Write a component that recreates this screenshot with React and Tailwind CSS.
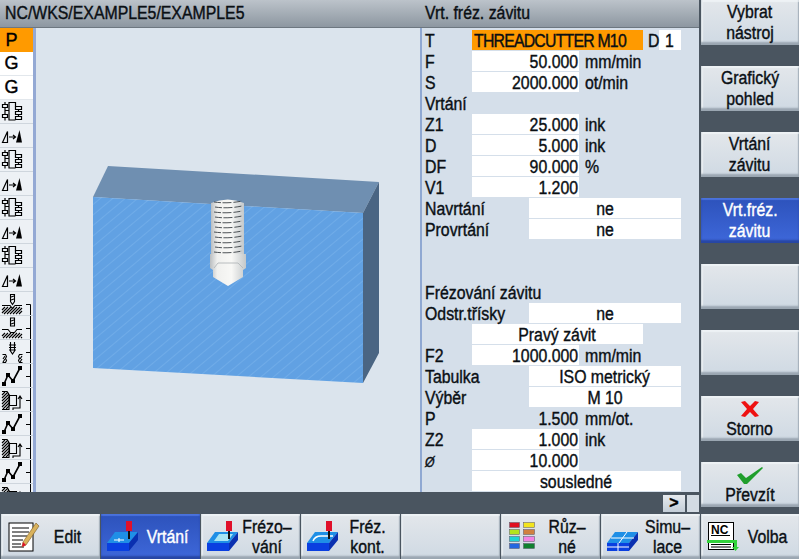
import React from 'react';

const font = "font-['Liberation_Sans',sans-serif] [-webkit-text-stroke:0.4px]";

// panel type is a narrow face, so every label is squeezed horizontally
function Txt({ children, align = 'left', className = '' }) {
  const origin = align === 'right' ? 'origin-right' : align === 'center' ? 'origin-center' : 'origin-left';
  return <span className={`inline-block whitespace-nowrap scale-x-[0.88] ${origin} ${className}`}>{children}</span>;
}

// ---- side bar glyphs (33x24 cells) ----
const Tree = () => (
  <g fill="none" stroke="#000" strokeWidth="1.2">
    <path d="M2.500 4.500h5v3h-5zM2.500 14.500h5v3h-5zM15.500 6.500h6v3h-6zM15.500 11.500h6v3h-6zM15.500 16.500h6v3h-6z" />
    <path d="M5 2v2.500M5 7.500v3h4V2.500h6.500V6.500M9 10.500v9.500h6.500M5 10.500v4M5 17.500v3M18.500 9.500v2M18.500 14.500v2" />
  </g>
);

const Tri = () => (
  <g>
    <path d="M2.500 18.500L7.500 7.500V18.500Z" fill="none" stroke="#000" strokeWidth="1.2" />
    <path d="M9 13h6M13 11l2.500 2-2.500 2" fill="none" stroke="#000" strokeWidth="1.2" />
    <path d="M16 18.500L19.500 6L22 18.500Z" fill="#000" />
  </g>
);

const hatch = (x0, x1, y0, y1) => {
  let d = '';
  for (let x = x0; x < x1 + (y1 - y0); x += 3) {
    const a = Math.max(x - (y1 - y0), x0);
    d += `M${a} ${y0 + (y1 - y0) - (a - (x - (y1 - y0)))}L${Math.min(x, x1)} ${y0 + (x > x1 ? x - x1 : 0)}`;
  }
  return d;
};

const Drill = () => (
  <g fill="none" stroke="#000" strokeWidth="1.1">
    <path d="M10.500 2.500h4v7l-2 3-2-3z" />
    <path d="M11 5l3-1M11 8l3-1" />
    <path d="M2 13.500h8l2.500 3 2.500-3h7" />
    <path d={hatch(2, 22, 15, 22)} />
  </g>
);

const Pocket = () => (
  <g fill="none" stroke="#000" strokeWidth="1.1">
    <path d="M10.500 2h4v8h-4z" />
    <path d="M11 5l3-1M11 8l3-1" />
    <path d="M2 13.500h6l2.500 3h4l2.500-3h5" />
    <path d={hatch(2, 22, 17, 22)} />
  </g>
);

const Thread = () => (
  <g fill="none" stroke="#000" strokeWidth="1.1">
    <path d="M10.500 2v9l2 3 2-3V2M9 5h7M9 7.500h7M9 10h7" />
    <path d="M2.500 14.500h3l1 2-1 2 1 2-1 2h-3" />
    <path d="M22.500 14.500h-3l-1 2 1 2-1 2 1 2h3" />
    <path d="M3 19l2-3M3 22l2-3M20 19l2-3M20 22l2-3" />
  </g>
);

const Zigzag = () => (
  <g>
    <path d="M4 20L8 11L13 17L20 4" fill="none" stroke="#000" strokeWidth="1.6" />
    <path d="M2 18h4v4H2zM6 9h4v4H6zM11 15h4v4h-4zM18 2h4v4h-4z" fill="#000" />
  </g>
);

const HatchArrow = () => (
  <g fill="none" stroke="#000" strokeWidth="1.1">
    <path d="M2 3.500h5l2 3v15H2" />
    <path d={hatch(2, 9, 4, 21)} />
    <path d="M9.500 7.500h7v10h-7z" />
    <path d="M13 22v-2h7V9M18 11l2-3 2 3" />
  </g>
);

const sideIcons = [
  Tree, Tri, Tree, Tri, Tree, Tri, Tree, Tri,
  Drill, Pocket, Thread, Zigzag, HatchArrow, Zigzag, HatchArrow, Zigzag, HatchArrow,
];

function SideBar() {
  return (
    <div className={`w-[33px] shrink-0 overflow-hidden bg-[#edf1f5] text-black text-[18px] ${font}`}>
      <div className="h-[24px] bg-[#ff9a00] flex items-center justify-center pr-[10px]">P</div>
      <div className="h-[24px] bg-white border-b border-[#e2e7ec] flex items-center justify-center pr-[10px]">G</div>
      <div className="h-[24px] bg-white border-b border-[#e2e7ec] flex items-center justify-center pr-[10px]">G</div>
      {sideIcons.map((Icon, i) => (
        <svg key={i} width="33" height="24" className="block border-b border-[#cfd6dd] box-border">
          <Icon />
          {i >= 8 && <path d={i === 8 ? 'M26 12.500h4.500V24' : 'M30.500 0V24M26 12.500h4.500'} fill="none" stroke="#000" />}
        </svg>
      ))}
    </div>
  );
}

// ---- workpiece preview ----
function Scene() {
  const threads = Array.from({ length: 11 }, (_, i) => 201 + i * 5);
  return (
    <svg width="384" height="464" viewBox="36 28 384 464" className="block">
      <defs>
        <pattern id="stripes" width="8" height="8" patternUnits="userSpaceOnUse" patternTransform="rotate(-40)">
          <rect width="8" height="8" fill="#61a1e3" />
          <rect width="8" height="1" fill="#70ace8" />
        </pattern>
        <linearGradient id="cyl" x1="0" x2="1" y1="0" y2="0">
          <stop offset="0" stopColor="#b9bdc0" />
          <stop offset="0.2" stopColor="#f0f0ee" />
          <stop offset="0.6" stopColor="#f8f8f6" />
          <stop offset="1" stopColor="#c4c8ca" />
        </linearGradient>
      </defs>
      <path d="M93 197L108 166L379 182L363 213Z" fill="#6f8fb1" />
      <path d="M379 182V353L363 383V213Z" fill="#4a6583" />
      <path d="M93 197L363 213V383L93 368Z" fill="url(#stripes)" />
      <path d="M211 203Q228 196 244 203V254H211Z" fill="url(#cyl)" />
      {threads.map((y, i) => (
        <path key={y} d={`M${214 + (i % 2)} ${y + 1}Q228 ${y + 3} 242 ${y}`} fill="none" stroke="#3a3f44" strokeWidth="0.9" strokeDasharray="7 1.500 9 2" />
      ))}
      <path d="M210 254H246V268L243 270V277L228 286L213 277V270L210 268Z" fill="url(#cyl)" />
      <path d="M214 268L218 263H238L243 268" fill="none" stroke="#b8bcbe" />
    </svg>
  );
}

// ---- parameter form ----
const rows = [
  { label: 'F', value: '50.000', unit: 'mm/min' },
  { label: 'S', value: '2000.000', unit: 'ot/min' },
  { label: 'Vrtání' },
  { label: 'Z1', value: '25.000', unit: 'ink' },
  { label: 'D', value: '5.000', unit: 'ink' },
  { label: 'DF', value: '90.000', unit: '%' },
  { label: 'V1', value: '1.200' },
  { label: 'Navrtání', toggle: 'ne' },
  { label: 'Provrtání', toggle: 'ne' },
  {},
  {},
  { label: 'Frézování závitu' },
  { label: 'Odstr.třísky', toggle: 'ne' },
  { label: '', wide: 'Pravý závit', w: 'w-[171px]' },
  { label: 'F2', value: '1000.000', unit: 'mm/min' },
  { label: 'Tabulka', toggle: 'ISO metrický' },
  { label: 'Výběr', toggle: 'M 10' },
  { label: 'P', value: '1.500', unit: 'mm/ot.', plain: true },
  { label: 'Z2', value: '1.000', unit: 'ink' },
  { label: 'Ø', labelClass: 'text-[14px] italic font-normal', value: '10.000' },
  { label: '', wide: 'sousledné', w: 'w-[209px]' },
];

function FormRow({ row }) {
  if (row.toggle) {
    return (
      <div className="h-[21px] flex">
        <div className="w-[107px] pl-[3px]"><Txt>{row.label}</Txt></div>
        <div className="w-[152px] h-[20px] bg-white text-center"><Txt align="center">{row.toggle}</Txt></div>
      </div>
    );
  }
  if (row.wide) {
    return (
      <div className="h-[21px] flex pl-[50px]">
        <div className={`${row.w} h-[20px] bg-white text-center`}><Txt align="center">{row.wide}</Txt></div>
      </div>
    );
  }
  if (row.value) {
    return (
      <div className="h-[21px] flex">
        <div className="w-[50px] pl-[3px]"><Txt className={row.labelClass}>{row.label}</Txt></div>
        <div className={`w-[107px] h-[20px] text-right pr-[1px] ${row.plain ? '' : 'bg-white'}`}><Txt align="right">{row.value}</Txt></div>
        <div className="ml-[6px]"><Txt>{row.unit}</Txt></div>
      </div>
    );
  }
  return <div className="h-[21px] pl-[3px]"><Txt>{row.label}</Txt></div>;
}

function ParamForm() {
  return (
    <div className={`w-[279px] shrink-0 border-l-2 border-[#8fa8d2] bg-[#d5dfea] pt-[2px] text-[18px] leading-[22px] text-[#0a0f14] ${font}`}>
      <div className="h-[21px] flex">
        <div className="w-[50px] pl-[3px]"><Txt>T</Txt></div>
        <div className="w-[171px] h-[20px] bg-[#ff9a00] pl-[2px]"><Txt className="tracking-[-0.9px]">THREADCUTTER M10</Txt></div>
        <div className="w-[16px] pl-[5px]"><Txt>D</Txt></div>
        <div className="w-[22px] h-[20px] bg-white pl-[6px]"><Txt>1</Txt></div>
      </div>
      {rows.map((row, i) => (
        <FormRow key={i} row={row} />
      ))}
    </div>
  );
}

// ---- soft keys ----
const keyIdle =
  'bg-linear-to-b from-[#e3e7eb] to-[#cfd9e3] text-[#0a0f14] shadow-[inset_0_-3px_2px_#9aa6b1,inset_2px_2px_1px_#eef2f5,inset_-1px_0_1px_#aab4be]';
const keyActive =
  'bg-linear-to-b from-[#2d52bb] to-[#3e68da] text-white shadow-[inset_0_-3px_2px_#2746a4,inset_0_2px_1px_#4a72dc]';

function SideKey({ lines = [], active, icon }) {
  return (
    <div className={`h-[45px] pt-[1px] flex flex-col items-center justify-center text-[18px] leading-[21px] text-center ${font} ${active ? keyActive : keyIdle}`}>
      {icon}
      {lines.map((line) => (
        <Txt key={line} align="center">{line}</Txt>
      ))}
    </div>
  );
}

function BottomKey({ lines = [], active, icon }) {
  return (
    <div className={`relative w-[99px] h-[45px] shrink-0 flex items-center pl-[36px] pr-[2px] text-[18px] leading-[20px] ${font} ${active ? keyActive : keyIdle}`}>
      {icon && (
        <svg width="40" height="45" className="absolute left-0 top-0">
          {icon}
        </svg>
      )}
      <div className="flex-1 flex flex-col items-center">
        {lines.map((line) => (
          <Txt key={line} align="center">{line}</Txt>
        ))}
      </div>
    </div>
  );
}

// machined block with spindle, shared by the milling keys
const Block = ({ children, tool = true }) => (
  <g>
    <path d="M6 29L14 18H37L28 29Z" fill="#1f8fe6" />
    <path d="M6 29H28V37H6Z" fill="#0a3fe0" />
    <path d="M28 29L37 18V26L28 37Z" fill="#0a30b0" />
    {children}
    {tool && (
      <g>
        <rect x="25" y="7" width="6" height="10" fill="#e0102a" />
        <rect x="27" y="17" width="2" height="8" fill="#111" />
      </g>
    )}
  </g>
);

const swatches = [
  ['#e01020', '#f2e41e'],
  ['#b4e41e', '#d08040'],
  ['#20d4d4', '#f284e4'],
  ['#2466e0', '#10802e'],
];

const EditIcon = (
  <g>
    <rect x="8" y="9" width="24" height="28" fill="#fff" stroke="#000" />
    <path d="M11 14h17M11 18h17M11 22h15M11 26h11M11 30h9M11 33h12" stroke="#000" />
    <path d="M35 9L38 12L25 31L21 33L22 28Z" fill="#d9b25c" stroke="#7a5a20" strokeWidth="0.6" />
    <path d="M21 33L22 28L25 31Z" fill="#e0102a" />
  </g>
);

const NcIcon = (
  <g>
    <rect x="7.500" y="8.500" width="25" height="27" fill="#fff" stroke="#000" />
    <text x="10" y="20" fontFamily="Liberation Sans" fontWeight="bold" fontSize="12" fill="#000">NC</text>
    <path d="M10 21.500h19" stroke="#000" />
    <path d="M10 30.500h20M10 33h20" stroke="#000" />
    <path d="M6 26h30v3H6z" fill="#34d23c" />
    <path d="M33 26h3v7h2l-3.500 4-3.500-4h2z" fill="#34d23c" />
  </g>
);

export default function App() {
  return (
    <div className="w-[799px] h-[559px] overflow-hidden flex flex-col bg-[#4a5560]">
      <div className="flex h-[514px]">
        <div className="w-[699px] shrink-0 flex flex-col">
          <div className={`h-[28px] flex items-center bg-linear-to-b from-[#bcc3ca] to-[#8d97a1] border-b border-[#6d7780] text-[18px] text-[#0a0f14] ${font}`}>
            <div className="w-[425px] pl-[5px]"><Txt>NC/WKS/EXAMPLE5/EXAMPLE5</Txt></div>
            <Txt>Vrt. fréz. závitu</Txt>
          </div>
          <div className="h-[464px] flex overflow-hidden">
            <SideBar />
            <div className="w-[3px] shrink-0 bg-[#94a9d4]" />
            <div className="w-[384px] shrink-0 bg-[#dbe4ed]">
              <Scene />
            </div>
            <ParamForm />
          </div>
          <div className="flex-1 flex items-center justify-end gap-[2px]">
            <div className={`w-[22px] h-[17px] bg-linear-to-b from-[#e6eaee] to-[#c4ced8] flex items-center justify-center text-[16px] font-bold text-black ${font}`}>&gt;</div>
            <div className="w-[12px] h-[17px] bg-[#d3dbe3]" />
          </div>
        </div>
        <div className="flex-1 pl-[2px] flex flex-col gap-[21px]">
          <SideKey lines={['Vybrat', 'nástroj']} />
          <SideKey lines={['Grafický', 'pohled']} />
          <SideKey lines={['Vrtání', 'závitu']} />
          <SideKey lines={['Vrt.fréz.', 'závitu']} active />
          <SideKey />
          <SideKey />
          <SideKey
            lines={['Storno']}
            icon={
              <svg width="20" height="16" viewBox="0 0 20 16" className="block mt-[3px] mb-[2px]">
                <path d="M1 1L5 0L10 5L15 0L19 1L13 8L19 15L15 16L10 11L5 16L1 15L7 8Z" fill="#ee1111" />
              </svg>
            }
          />
          <SideKey
            lines={['Převzít']}
            icon={
              <svg width="26" height="17" viewBox="0 0 26 17" className="block mt-[2px] mb-[1px]">
                <path d="M0 8L4 6L9 11L25 0L26 1L10 17H7Z" fill="#1f9e2c" />
              </svg>
            }
          />
        </div>
      </div>
      <div className="flex h-[45px] pl-[1px] gap-[1px]">
        <BottomKey lines={['Edit']} icon={EditIcon} />
        <BottomKey lines={['Vrtání']} active icon={
          <Block>
            <path d="M13 26h10M18 24v4" stroke="#fff" />
          </Block>
        } />
        <BottomKey lines={['Frézo–', 'vání']} icon={
          <Block>
            <path d="M13 27L18 20H32L27 27Z" fill="#a8e4f4" />
          </Block>
        } />
        <BottomKey lines={['Fréz.', 'kont.']} icon={
          <Block>
            <path d="M12 27Q14 22 20 22H32" fill="none" stroke="#fff" strokeWidth="1.500" />
          </Block>
        } />
        <BottomKey />
        <BottomKey lines={['Růz–', 'né']} icon={
          <g>
            {swatches.map((pair, i) => (
              <g key={i}>
                <rect x="8.500" y={8.5 + i * 7} width="10" height="5" fill={pair[0]} stroke="#556" strokeWidth="0.5" />
                <rect x="22.500" y={8.5 + i * 7} width="11" height="5" fill={pair[1]} stroke="#556" strokeWidth="0.5" />
              </g>
            ))}
          </g>
        } />
        <BottomKey lines={['Simu–', 'lace']} icon={
          <Block tool={false}>
            <path d="M10 24H33M18 29L26 18M17 29V37M6 33H28" stroke="#fff" />
          </Block>
        } />
        <BottomKey lines={['Volba']} icon={NcIcon} />
      </div>
    </div>
  );
}
